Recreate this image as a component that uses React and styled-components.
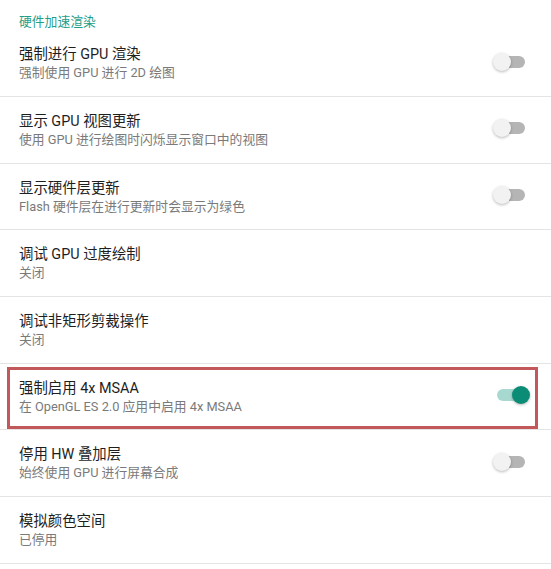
import React from 'react';
import styled, { createGlobalStyle } from 'styled-components';

const GlobalStyle = createGlobalStyle`
  html, body {
    margin: 0;
    padding: 0;
    background: #ffffff;
  }
  body {
    font-family: Roboto, "Noto Sans CJK SC", sans-serif;
    -webkit-font-smoothing: antialiased;
  }
`;

const Page = styled.div`
  width: 551px;
  background: #ffffff;
`;

const SectionHeader = styled.div`
  height: 30.3px;
  box-sizing: border-box;
  padding: 13px 0 0 19px;
  font-size: 12.8px;
  line-height: 18px;
  color: #1f9e89;
`;

const Row = styled.div`
  position: relative;
  height: 66.7px;
  box-sizing: border-box;
  display: flex;
  align-items: center;
  padding: 0 25px 0 19px;
  border-bottom: 1px solid #e4e4e4;

  ${({ $highlight }) => $highlight && `
    &::after {
      content: '';
      position: absolute;
      left: 7px;
      right: 13px;
      top: 3px;
      bottom: 0;
      border: 3px solid #c3585b;
      pointer-events: none;
    }
  `}
`;

const TextBlock = styled.div`
  flex: 1;
  display: flex;
  flex-direction: column;
  padding-top: 1px;
`;

const Title = styled.div`
  font-size: 14.4px;
  line-height: 19px;
  color: #1e1e1e;
`;

const Summary = styled.div`
  font-size: 12.8px;
  line-height: 18px;
  color: #7a7a7a;
`;

const Switch = styled.div`
  position: relative;
  width: 32px;
  height: 20px;
  flex-shrink: 0;
  margin-top: -3px;
`;

const Track = styled.div`
  position: absolute;
  left: 3px;
  right: 1px;
  top: 4px;
  height: 12px;
  border-radius: 6px;
  background: ${({ $on }) => ($on ? '#a8d9d1' : '#b5b5b5')};
`;

const Thumb = styled.div`
  position: absolute;
  top: 1px;
  left: ${({ $on }) => ($on ? '18px' : '-1px')};
  width: 18px;
  height: 18px;
  border-radius: 50%;
  background: ${({ $on }) => ($on ? '#0b8c76' : '#f2f2f2')};
  box-shadow: 0 1px 3px rgba(0, 0, 0, 0.28);
`;

const Toggle = ({ on }) => (
  <Switch>
    <Track $on={on} />
    <Thumb $on={on} />
  </Switch>
);

const items = [
  { title: '强制进行 GPU 渲染', summary: '强制使用 GPU 进行 2D 绘图', toggle: false },
  { title: '显示 GPU 视图更新', summary: '使用 GPU 进行绘图时闪烁显示窗口中的视图', toggle: false },
  { title: '显示硬件层更新', summary: 'Flash 硬件层在进行更新时会显示为绿色', toggle: false },
  { title: '调试 GPU 过度绘制', summary: '关闭' },
  { title: '调试非矩形剪裁操作', summary: '关闭' },
  { title: '强制启用 4x MSAA', summary: '在 OpenGL ES 2.0 应用中启用 4x MSAA', toggle: true, highlight: true },
  { title: '停用 HW 叠加层', summary: '始终使用 GPU 进行屏幕合成', toggle: false },
  { title: '模拟颜色空间', summary: '已停用' },
];

const App = () => (
  <Page>
    <GlobalStyle />
    <SectionHeader>硬件加速渲染</SectionHeader>
    {items.map(item => (
      <Row key={item.title} $highlight={item.highlight}>
        <TextBlock>
          <Title>{item.title}</Title>
          <Summary>{item.summary}</Summary>
        </TextBlock>
        {item.toggle !== undefined && <Toggle on={item.toggle} />}
      </Row>
    ))}
  </Page>
);

export default App;
